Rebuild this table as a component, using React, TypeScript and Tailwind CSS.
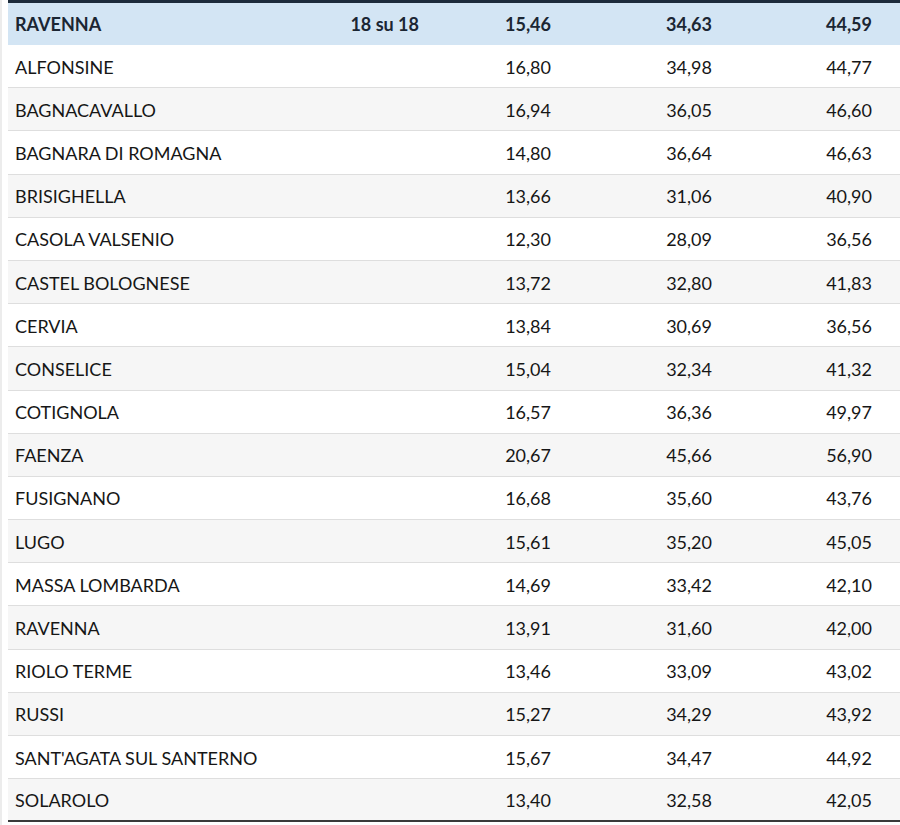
import React from "react";

const rows: [string, string, string, string][] = [
  ["ALFONSINE", "16,80", "34,98", "44,77"],
  ["BAGNACAVALLO", "16,94", "36,05", "46,60"],
  ["BAGNARA DI ROMAGNA", "14,80", "36,64", "46,63"],
  ["BRISIGHELLA", "13,66", "31,06", "40,90"],
  ["CASOLA VALSENIO", "12,30", "28,09", "36,56"],
  ["CASTEL BOLOGNESE", "13,72", "32,80", "41,83"],
  ["CERVIA", "13,84", "30,69", "36,56"],
  ["CONSELICE", "15,04", "32,34", "41,32"],
  ["COTIGNOLA", "16,57", "36,36", "49,97"],
  ["FAENZA", "20,67", "45,66", "56,90"],
  ["FUSIGNANO", "16,68", "35,60", "43,76"],
  ["LUGO", "15,61", "35,20", "45,05"],
  ["MASSA LOMBARDA", "14,69", "33,42", "42,10"],
  ["RAVENNA", "13,91", "31,60", "42,00"],
  ["RIOLO TERME", "13,46", "33,09", "43,02"],
  ["RUSSI", "15,27", "34,29", "43,92"],
  ["SANT'AGATA SUL SANTERNO", "15,67", "34,47", "44,92"],
  ["SOLAROLO", "13,40", "32,58", "42,05"],
];

export default function App() {
  return (
    <div
      className="w-[900px] h-[825px] bg-white overflow-hidden flex"
      style={{ fontFamily: "Lato, 'Noto Sans', sans-serif" }}
    >
      <div className="w-[2px] bg-[#ececec] shrink-0" />
      <div className="w-[6px] shrink-0" />
      <div className="flex-1 flex flex-col">
        <div className="border-t-[3px] border-[#1d2b3b] bg-[#d3e5f4] h-[45px] flex items-center text-[18px] font-bold text-[#1b2633] shrink-0">
          <div className="w-[290px] pl-[7px]">RAVENNA</div>
          <div className="w-[121px] text-right">18 su 18</div>
          <div className="w-[132px] text-right">15,46</div>
          <div className="w-[161px] text-right">34,63</div>
          <div className="w-[160px] text-right">44,59</div>
        </div>
        {rows.map((r, i) => (
          <div
            key={r[0]}
            className={
              "h-[43.2px] shrink-0 flex items-center pt-[2px] text-[18px] text-[#161616] border-b " +
              (i === rows.length - 1
                ? "border-b-2 border-[#3a3a3a] "
                : "border-[#dedede] ") +
              (i % 2 === 0 ? "bg-white" : "bg-[#f6f6f6]")
            }
          >
            <div className="w-[290px] pl-[7px]">{r[0]}</div>
            <div className="w-[121px] text-right"></div>
            <div className="w-[132px] text-right">{r[1]}</div>
            <div className="w-[161px] text-right">{r[2]}</div>
            <div className="w-[160px] text-right">{r[3]}</div>
          </div>
        ))}
      </div>
    </div>
  );
}
